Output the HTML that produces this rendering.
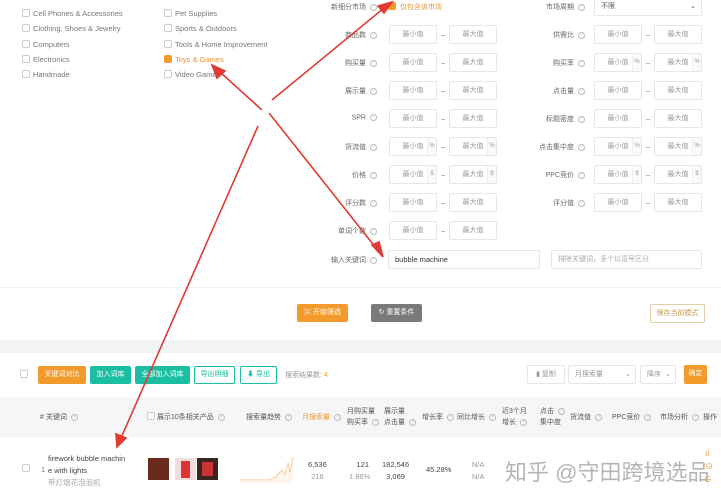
<!DOCTYPE html>
<html><head><meta charset="utf-8"><style>
*{box-sizing:border-box;margin:0;padding:0}
body{width:721px;height:500px;position:relative;overflow:hidden;background:#fff;font-family:"Liberation Sans","Noto Sans CJK SC",sans-serif;font-size:7.5px;color:#777}
.a{position:absolute;white-space:nowrap}
.cb{position:absolute;width:8px;height:8px;border:1px solid #ccc;border-radius:2px;background:#fff}
.cbo{background:#f39a2c;border-color:#f39a2c}
.in{position:absolute;height:19px;border:1px solid #e6e6e6;border-radius:2px;color:#999;font-size:7px;text-align:center;line-height:17px;background:#fff}
.lb{position:absolute;text-align:right;width:80px;color:#666;font-size:7px}
.q{display:inline-block;width:7px;height:7px;border:1px solid #bbb;border-radius:50%;font-size:5px;line-height:5px;text-align:center;color:#bbb;margin-left:4px;vertical-align:middle}
.btn{position:absolute;height:18px;border-radius:2px;color:#fff;font-size:7px;text-align:center;line-height:18px}
.unit{position:absolute;top:0;right:0;width:9px;height:17px;border-left:1px solid #eee;background:#fafafa;font-size:6px;color:#999}
</style></head><body>
<div class="cb" style="left:22px;top:9px"></div><div class="a" style="left:33px;top:9px">Cell Phones &amp; Accessories</div>
<div class="cb" style="left:22px;top:24px"></div><div class="a" style="left:33px;top:24px">Clothing, Shoes &amp; Jewelry</div>
<div class="cb" style="left:22px;top:40px"></div><div class="a" style="left:33px;top:40px">Computers</div>
<div class="cb" style="left:22px;top:55px"></div><div class="a" style="left:33px;top:55px">Electronics</div>
<div class="cb" style="left:22px;top:70px"></div><div class="a" style="left:33px;top:70px">Handmade</div>
<div class="cb" style="left:164px;top:9px"></div><div class="a" style="left:175px;top:9px">Pet Supplies</div>
<div class="cb" style="left:164px;top:24px"></div><div class="a" style="left:175px;top:24px">Sports &amp; Outdoors</div>
<div class="cb" style="left:164px;top:40px"></div><div class="a" style="left:175px;top:40px">Tools &amp; Home Improvement</div>
<div class="cb cbo" style="left:164px;top:55px"></div><div class="a" style="left:175px;top:55px;color:#e8953a">Toys &amp; Games</div>
<div class="cb" style="left:164px;top:70px"></div><div class="a" style="left:175px;top:70px">Video Games</div>

<div class="lb" style="left:297px;top:2px">新细分市场<span class="q">?</span></div>
<div class="cb cbo" style="left:388px;top:2px"></div><div class="a" style="left:400px;top:2px;color:#e8953a;font-size:7px">仅包含该市场</div>
<div class="lb" style="left:505px;top:2px">市场周期<span class="q">?</span></div>
<div class="in" style="left:594px;top:-3px;width:108px;text-align:left;padding-left:6px;color:#555">不限<span style="position:absolute;right:5px">⌄</span></div>

<div class="lb" style="left:297px;top:30px">商品数<span class="q">?</span></div><div class="in" style="left:389px;top:25px;width:48px">最小值</div><div class="a" style="left:441px;top:30px">–</div><div class="in" style="left:449px;top:25px;width:48px">最大值</div>
<div class="lb" style="left:505px;top:30px">供需比<span class="q">?</span></div><div class="in" style="left:594px;top:25px;width:48px">最小值</div><div class="a" style="left:646px;top:30px">–</div><div class="in" style="left:654px;top:25px;width:48px">最大值</div>

<div class="lb" style="left:297px;top:58px">购买量<span class="q">?</span></div><div class="in" style="left:389px;top:53px;width:48px">最小值</div><div class="a" style="left:441px;top:58px">–</div><div class="in" style="left:449px;top:53px;width:48px">最大值</div>
<div class="lb" style="left:505px;top:58px">购买率<span class="q">?</span></div><div class="in" style="left:594px;top:53px;width:48px">最小值<div class="unit">%</div></div><div class="a" style="left:646px;top:58px">–</div><div class="in" style="left:654px;top:53px;width:48px">最大值<div class="unit">%</div></div>

<div class="lb" style="left:297px;top:86px">展示量<span class="q">?</span></div><div class="in" style="left:389px;top:81px;width:48px">最小值</div><div class="a" style="left:441px;top:86px">–</div><div class="in" style="left:449px;top:81px;width:48px">最大值</div>
<div class="lb" style="left:505px;top:86px">点击量<span class="q">?</span></div><div class="in" style="left:594px;top:81px;width:48px">最小值</div><div class="a" style="left:646px;top:86px">–</div><div class="in" style="left:654px;top:81px;width:48px">最大值</div>

<div class="lb" style="left:297px;top:114px">SPR<span class="q">?</span></div><div class="in" style="left:389px;top:109px;width:48px">最小值</div><div class="a" style="left:441px;top:114px">–</div><div class="in" style="left:449px;top:109px;width:48px">最大值</div>
<div class="lb" style="left:505px;top:114px">标题密度<span class="q">?</span></div><div class="in" style="left:594px;top:109px;width:48px">最小值</div><div class="a" style="left:646px;top:114px">–</div><div class="in" style="left:654px;top:109px;width:48px">最大值</div>

<div class="lb" style="left:297px;top:142px">货流值<span class="q">?</span></div><div class="in" style="left:389px;top:137px;width:48px">最小值<div class="unit">%</div></div><div class="a" style="left:441px;top:142px">–</div><div class="in" style="left:449px;top:137px;width:48px">最大值<div class="unit">%</div></div>
<div class="lb" style="left:505px;top:142px">点击集中度<span class="q">?</span></div><div class="in" style="left:594px;top:137px;width:48px">最小值<div class="unit">%</div></div><div class="a" style="left:646px;top:142px">–</div><div class="in" style="left:654px;top:137px;width:48px">最大值<div class="unit">%</div></div>

<div class="lb" style="left:297px;top:170px">价格<span class="q">?</span></div><div class="in" style="left:389px;top:165px;width:48px">最小值<div class="unit">$</div></div><div class="a" style="left:441px;top:170px">–</div><div class="in" style="left:449px;top:165px;width:48px">最大值<div class="unit">$</div></div>
<div class="lb" style="left:505px;top:170px">PPC竞价<span class="q">?</span></div><div class="in" style="left:594px;top:165px;width:48px">最小值<div class="unit">$</div></div><div class="a" style="left:646px;top:170px">–</div><div class="in" style="left:654px;top:165px;width:48px">最大值<div class="unit">$</div></div>

<div class="lb" style="left:297px;top:198px">评分数<span class="q">?</span></div><div class="in" style="left:389px;top:193px;width:48px">最小值</div><div class="a" style="left:441px;top:198px">–</div><div class="in" style="left:449px;top:193px;width:48px">最大值</div>
<div class="lb" style="left:505px;top:198px">评分值<span class="q">?</span></div><div class="in" style="left:594px;top:193px;width:48px">最小值</div><div class="a" style="left:646px;top:198px">–</div><div class="in" style="left:654px;top:193px;width:48px">最大值</div>

<div class="lb" style="left:297px;top:226px">单词个数<span class="q">?</span></div><div class="in" style="left:389px;top:221px;width:48px">最小值</div><div class="a" style="left:441px;top:226px">–</div><div class="in" style="left:449px;top:221px;width:48px">最大值</div>

<div class="lb" style="left:297px;top:255px">输入关键词<span class="q">?</span></div>
<div class="in" style="left:388px;top:250px;width:152px;text-align:left;padding-left:6px;color:#333;font-size:7.5px">bubble machine</div>
<div class="in" style="left:551px;top:250px;width:151px;text-align:left;padding-left:6px;color:#aaa">排除关键词，多个以逗号区分</div>

<div style="position:absolute;left:0;top:287px;width:721px;height:1px;background:#f0f0f0"></div>
<div class="btn" style="left:297px;top:304px;width:51px;background:#f39a2c">⌘ 开始筛选</div>
<div class="btn" style="left:371px;top:304px;width:51px;background:#7a7a7a">↻ 重置条件</div>
<div class="btn" style="left:650px;top:304px;width:55px;height:19px;background:#fff;border:1px solid #e0cfa8;color:#c79a4e;line-height:17px">保存当前模式</div>

<div style="position:absolute;left:0;top:340px;width:721px;height:13px;background:#f3f4f6"></div>

<div class="cb" style="left:20px;top:370px"></div>
<div class="btn" style="left:38px;top:366px;width:48px;background:#f39a2c">关键词对比</div>
<div class="btn" style="left:90px;top:366px;width:41px;background:#19bfa0">加入词库</div>
<div class="btn" style="left:135px;top:366px;width:55px;background:#19bfa0">全部加入词库</div>
<div class="btn" style="left:194px;top:366px;width:41px;background:#fff;border:1px solid #19bfa0;color:#19bfa0;line-height:16px">导出明细</div>
<div class="btn" style="left:240px;top:366px;width:37px;background:#fff;border:1px solid #19bfa0;color:#19bfa0;line-height:16px">⬇ 导出</div>
<div class="a" style="left:285px;top:370px;color:#999;font-size:7px">搜索结果数: <span style="color:#f39a2c">4</span></div>
<div class="in" style="left:527px;top:365px;width:38px">▮ 复制</div>
<div class="in" style="left:568px;top:365px;width:68px;text-align:left;padding-left:6px">月搜索量<span style="position:absolute;right:4px">⌄</span></div>
<div class="in" style="left:640px;top:365px;width:36px;text-align:left;padding-left:6px">降序<span style="position:absolute;right:4px">⌄</span></div>
<div class="btn" style="left:684px;top:365px;width:23px;height:19px;background:#f39a2c">确定</div>

<div style="position:absolute;left:0;top:397px;width:721px;height:40px;background:#f5f6f8"></div>
<div class="a" style="left:40px;top:412px;color:#555;font-size:7px"># 关键词<span class="q">?</span></div>
<div class="cb" style="left:147px;top:412px"></div><div class="a" style="left:157px;top:412px;color:#555;font-size:7px">展示10条相关产品<span class="q">?</span></div>
<div class="a" style="left:246px;top:412px;color:#555;font-size:7px">搜索量趋势<span class="q">?</span></div>
<div class="a" style="left:302px;top:412px;color:#f39a2c;font-size:7px">月搜索量<span class="q">?</span></div>
<div class="a" style="left:347px;top:406px;color:#555;line-height:11px;font-size:7px">月购买量<br>购买率<span class="q">?</span></div>
<div class="a" style="left:384px;top:406px;color:#555;line-height:11px;font-size:7px">展示量<br>点击量<span class="q">?</span></div>
<div class="a" style="left:422px;top:412px;color:#555;font-size:7px">增长率<span class="q">?</span></div>
<div class="a" style="left:457px;top:412px;color:#555;font-size:7px">同比增长<span class="q">?</span></div>
<div class="a" style="left:502px;top:406px;color:#555;line-height:11px;font-size:7px">近3个月<br>增长<span class="q">?</span></div>
<div class="a" style="left:540px;top:406px;color:#555;line-height:11px;font-size:7px">点击<span class="q">?</span><br>集中度</div>
<div class="a" style="left:570px;top:412px;color:#555;font-size:7px">货流值<span class="q">?</span></div>
<div class="a" style="left:612px;top:412px;color:#555;font-size:7px">PPC竞价<span class="q">?</span></div>
<div class="a" style="left:660px;top:412px;color:#555;font-size:7px">市场分析<span class="q">?</span></div>
<div class="a" style="left:703px;top:412px;color:#555;font-size:7px">操作</div>

<div class="cb" style="left:22px;top:464px"></div>
<div class="a" style="left:41px;top:465px">1</div>
<div class="a" style="left:48px;top:453px;color:#444;line-height:12px;font-size:7.5px">firework bubble machin<br>e with lights<br><span style="color:#aaa">带灯烟花泡泡机</span></div>
<div style="position:absolute;left:148px;top:458px;width:21px;height:22px;background:#6b2a1e"></div>
<div style="position:absolute;left:175px;top:458px;width:21px;height:22px;background:#f3dcdc"><div style="margin:3px 6px;width:9px;height:17px;background:#d33"></div></div>
<div style="position:absolute;left:197px;top:458px;width:21px;height:22px;background:#3a2520"><div style="margin:4px 5px;width:11px;height:14px;background:#c33"></div></div>
<svg class="a" style="left:240px;top:455px" width="55" height="28"><path d="M0 25 L28 25 L36 22 L42 15 L45 20 L48 8 L50 18 L53 2" fill="none" stroke="#f0c48a" stroke-width="1"/><path d="M0 25 L28 25 L36 22 L42 15 L45 20 L48 8 L50 18 L53 2 L53 28 L0 28Z" fill="#fbeee0" opacity=".6"/></svg>
<div class="a" style="left:308px;top:459px;color:#444;text-align:center;line-height:12px">6,536<br><span style="color:#999">218</span></div>
<div class="a" style="left:349px;top:459px;color:#444;text-align:right;line-height:12px;width:20px">121<br><span style="color:#999">1.86%</span></div>
<div class="a" style="left:382px;top:459px;color:#444;text-align:center;line-height:12px">182,546<br>3,069</div>
<div class="a" style="left:426px;top:465px;color:#444">45.28%</div>
<div class="a" style="left:472px;top:459px;color:#999;line-height:12px">N/A<br>N/A</div>
<div class="a" style="left:705px;top:447px;color:#f39a2c;line-height:13px;font-size:8px">ıl<br>⊖<br>G</div>
<div class="a" style="left:505px;top:455px;color:rgba(150,150,150,.7);font-size:22px">知乎 @守田跨境选品</div>

<svg class="a" style="left:0;top:0" width="721" height="500">
<g stroke="#e03a33" stroke-width="1.6" fill="#e03a33">
<line x1="272" y1="100" x2="384" y2="8"/><polygon points="392,2 378,6 384,13"/>
<line x1="262" y1="110" x2="220" y2="72"/><polygon points="212,65 217,78 225,71"/>
<line x1="269" y1="113" x2="376" y2="248"/><polygon points="383,257 372,245 379,242"/>
<line x1="258" y1="126" x2="121" y2="438"/><polygon points="117,447 116,434 126,438"/>
</g></svg>
</body></html>
